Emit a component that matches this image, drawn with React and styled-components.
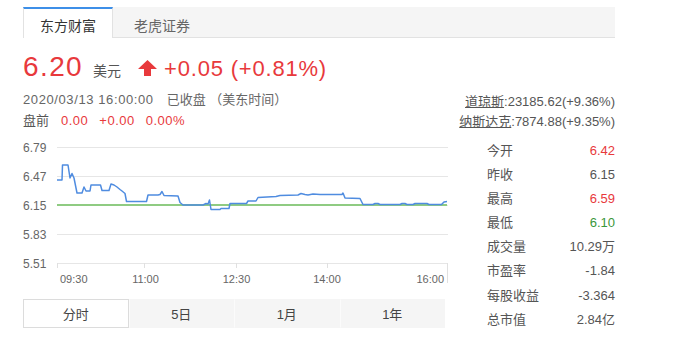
import React from 'react';
import styled, { createGlobalStyle } from 'styled-components';

const FONT = `"Liberation Sans", Arial, "Noto Sans CJK SC", sans-serif`;
const RED = '#e8393c';
const GREEN = '#3a973a';

const GlobalStyle = createGlobalStyle`
  html, body { margin: 0; padding: 0; background: #fff; }
  body { font-family: ${FONT}; color: #333; }
`;

const Page = styled.div`
  width: 592px;
  padding: 7px 0 0 23px;
`;

const TabBar = styled.div`
  display: flex;
  height: 30px;
  background: #f5f5f5;
  border-bottom: 1px solid #e2e2e2;
`;

const SourceTab = styled.div`
  box-sizing: border-box;
  width: ${(p) => p.$w}px;
  height: 31px;
  margin-bottom: -1px;
  padding-top: 3px;
  display: flex;
  align-items: center;
  justify-content: center;
  font-size: 14px;
  color: ${(p) => (p.$active ? '#333' : '#666')};
  background: ${(p) => (p.$active ? '#fff' : 'transparent')};
  border-top: 2px solid ${(p) => (p.$active ? '#3d8fe8' : 'transparent')};
  border-left: 1px solid ${(p) => (p.$active ? '#e2e2e2' : 'transparent')};
  border-right: 1px solid ${(p) => (p.$active ? '#e2e2e2' : 'transparent')};
`;

const Quote = styled.div`
  display: flex;
  justify-content: space-between;
  align-items: flex-end;
  margin-top: 12px;
`;

const QuoteLeft = styled.div`
  display: flex;
  flex-direction: column;
`;

const PriceRow = styled.div`
  display: flex;
  align-items: baseline;
  height: 34px;
  line-height: 34px;
`;

const Price = styled.span`
  font-size: 28px;
  letter-spacing: 1.4px;
  color: ${RED};
`;

const Unit = styled.span`
  font-size: 14px;
  color: #555;
  margin-left: 10px;
`;

const Arrow = styled.svg`
  margin-left: 17px;
  margin-bottom: 1px;
  align-self: flex-end;
  position: relative;
  top: -7px;
`;

const Change = styled.span`
  font-size: 22px;
  letter-spacing: 0.8px;
  color: ${RED};
  margin-left: 7px;
`;

const InfoRow = styled.div`
  display: flex;
  align-items: baseline;
  font-size: 13px;
  line-height: 21px;
  color: #666;
  margin-top: ${(p) => p.$mt || 0}px;
`;

const Gap = styled.span`
  margin-left: ${(p) => p.$ml}px;
  color: ${(p) => p.$color || 'inherit'};
  letter-spacing: ${(p) => p.$ls || 0}px;
`;

const IndexBox = styled.div`
  display: flex;
  flex-direction: column;
  align-items: flex-end;
  font-size: 13px;
  line-height: 20px;
  color: #555;
  margin-bottom: -1px;
`;

const IndexName = styled.span`
  text-decoration: underline;
  color: #555;
`;

const Main = styled.div`
  display: flex;
  margin-top: 7px;
`;

const ChartCol = styled.div`
  width: 426px;
  display: flex;
  flex-direction: column;
`;

const ChartSvg = styled.svg`
  display: block;
  font-family: ${FONT};
`;

const RangeTabs = styled.div`
  display: grid;
  grid-template-columns: repeat(4, 1fr);
  width: 422px;
  height: 29px;
  margin-top: 11px;
  background: #f5f5f5;
`;

const RangeTab = styled.div`
  box-sizing: border-box;
  display: flex;
  align-items: center;
  justify-content: center;
  font-size: 13px;
  color: #444;
  background: ${(p) => (p.$active ? '#fff' : '#f5f5f5')};
  border: 1px solid ${(p) => (p.$active ? '#dcdcdc' : 'transparent')};
  border-left: 1px solid ${(p) => (p.$active ? '#dcdcdc' : '#fbfbfb')};
`;

const Stats = styled.div`
  margin-left: 38px;
  width: 128px;
  padding-top: 1px;
  display: flex;
  flex-direction: column;
`;

const StatRow = styled.div`
  display: flex;
  justify-content: space-between;
  height: 24.1px;
  line-height: 24px;
  font-size: 13px;
  color: #555;
`;

const StatValue = styled.span`
  color: ${(p) => p.$color || '#555'};
`;

const linePoints = `57,180 62,180 62.5,165 68,165 70,178 72,173.5 74,178 77,193 82,193 84,187 86,191 90,191 91,185 100.5,185 102,190.5 109,190.5 111,184 114,185 117,187 120,189.5 122,191 125,193.5 126.5,201.5 146.5,201.5 148,195 158,195 160,194.5 162,191.5 164,195.5 178,196 180,202.5 183,205 203,205 206,203.5 208,204 209.5,200 211,209.5 220,209.5 221,208.5 229,208.5 230,203.5 246.5,203.5 248,201 256,201 258,197.5 276,196.5 280,195.5 298,195 301,193.5 305,194.5 308,195 313,194 320,194.5 342,194.5 343,193 345,198 360,198.5 363,204.5 373,204.5 375,203.5 378,203.5 380,204.5 400,204.5 402,203.5 405,203.5 407,204.5 413,204.5 415,203.5 427,203.5 429,204.5 441.5,204.5 444,202 447,201.5`;

const yLabels = [
  ['6.79', 147],
  ['6.47', 176],
  ['6.15', 205],
  ['5.83', 234],
  ['5.51', 263],
];

const xTicks = [
  { t: '09:30', x: 57, lx: 60, anchor: 'start' },
  { t: '11:00', x: 144, lx: 145.5, anchor: 'middle' },
  { t: '12:30', x: 236, lx: 236.5, anchor: 'middle' },
  { t: '14:00', x: 327, lx: 327, anchor: 'middle' },
  { t: '16:00', x: 447, lx: 444, anchor: 'end' },
];

const stats = [
  ['今开', '6.42', RED],
  ['昨收', '6.15'],
  ['最高', '6.59', RED],
  ['最低', '6.10', GREEN],
  ['成交量', '10.29万'],
  ['市盈率', '-1.84'],
  ['每股收益', '-3.364'],
  ['总市值', '2.84亿'],
];

function Chart() {
  return (
    <ChartSvg width="426" height="150" viewBox="23 138 426 150">
      {yLabels.map(([t, y]) => (
        <g key={t}>
          <line x1="57" x2="448" y1={y + 0.5} y2={y + 0.5} stroke="#e6e6e6" strokeWidth="1" />
          <text x="23" y={y + 4.5} fontSize="12" fill="#666">{t}</text>
        </g>
      ))}
      {xTicks.map((k) => (
        <g key={k.t}>
          <line x1={k.x + 0.5} x2={k.x + 0.5} y1="263" y2={k.x === 447 ? 283 : 268} stroke="#e0e0e0" strokeWidth="1" />
          <text x={k.lx} y="283" fontSize="11" fill="#666" textAnchor={k.anchor}>{k.t}</text>
        </g>
      ))}
      <line x1="57" x2="447" y1="205" y2="205" stroke="#8fcb82" strokeWidth="2" />
      <polyline points={linePoints} fill="none" stroke="#4f8ce0" strokeWidth="1.5" strokeLinejoin="round" />
    </ChartSvg>
  );
}

export default function App() {
  return (
    <>
      <GlobalStyle />
      <Page>
        <TabBar>
          <SourceTab $w={90} $active>东方财富</SourceTab>
          <SourceTab $w={98}>老虎证券</SourceTab>
        </TabBar>

        <Quote>
          <QuoteLeft>
            <PriceRow>
              <Price>6.20</Price>
              <Unit>美元</Unit>
              <Arrow width="19" height="16" viewBox="0 0 19 16">
                <polygon points="9.5,0 19,9 13,9 13,16 6,16 6,9 0,9" fill={RED} />
              </Arrow>
              <Change>+0.05 (+0.81%)</Change>
            </PriceRow>
            <InfoRow $mt={5}>
              <Gap $ml={0} $ls={0.6}>2020/03/13 16:00:00</Gap>
              <Gap $ml={13}>已收盘 （美东时间）</Gap>
            </InfoRow>
            <InfoRow>
              <Gap $ml={0} $color="#555">盘前</Gap>
              <Gap $ml={12} $color={RED} $ls={0.5}>0.00</Gap>
              <Gap $ml={11} $color={RED} $ls={0.5}>+0.00</Gap>
              <Gap $ml={11} $color={RED} $ls={0.5}>0.00%</Gap>
            </InfoRow>
          </QuoteLeft>
          <IndexBox>
            <div><IndexName>道琼斯</IndexName>:23185.62(+9.36%)</div>
            <div><IndexName>纳斯达克</IndexName>:7874.88(+9.35%)</div>
          </IndexBox>
        </Quote>

        <Main>
          <ChartCol>
            <Chart />
            <RangeTabs>
              <RangeTab $active>分时</RangeTab>
              <RangeTab>5日</RangeTab>
              <RangeTab>1月</RangeTab>
              <RangeTab>1年</RangeTab>
            </RangeTabs>
          </ChartCol>
          <Stats>
            {stats.map(([k, v, c]) => (
              <StatRow key={k}>
                <span>{k}</span>
                <StatValue $color={c}>{v}</StatValue>
              </StatRow>
            ))}
          </Stats>
        </Main>
      </Page>
    </>
  );
}
